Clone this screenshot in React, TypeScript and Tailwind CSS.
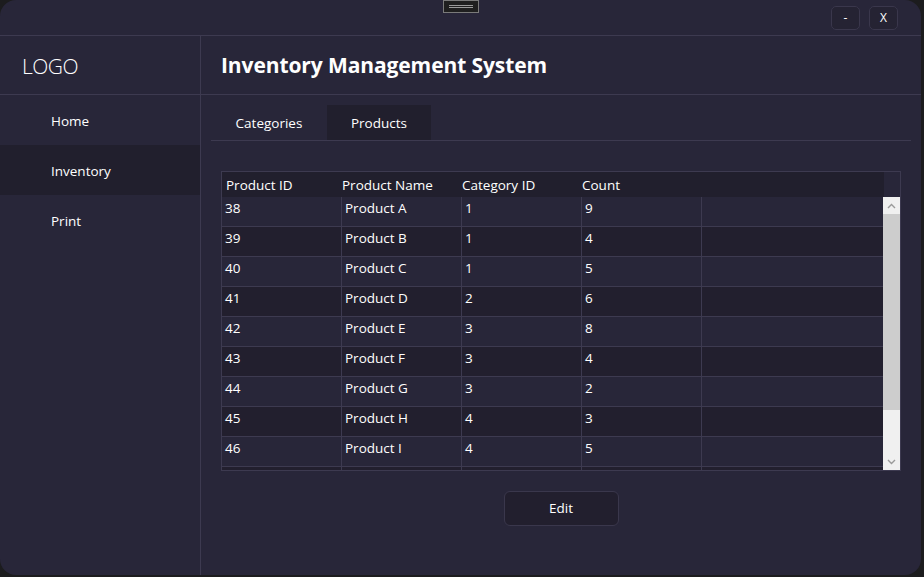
import React from 'react'

const rows = [
  { id: 38, name: 'Product A', cat: 1, count: 9 },
  { id: 39, name: 'Product B', cat: 1, count: 4 },
  { id: 40, name: 'Product C', cat: 1, count: 5 },
  { id: 41, name: 'Product D', cat: 2, count: 6 },
  { id: 42, name: 'Product E', cat: 3, count: 8 },
  { id: 43, name: 'Product F', cat: 3, count: 4 },
  { id: 44, name: 'Product G', cat: 3, count: 2 },
  { id: 45, name: 'Product H', cat: 4, count: 3 },
  { id: 46, name: 'Product I', cat: 4, count: 5 },
]

const navItems = ['Home', 'Inventory', 'Print']

export default function App() {
  return (
    <div
      className="w-[924px] h-[577px] bg-[#1c1c1e] text-white overflow-hidden"
      style={{ fontFamily: '"Open Sans", "Noto Sans", sans-serif' }}
    >
      <div className="w-[921px] h-[575px] bg-[#282639] rounded-[16px] flex flex-col overflow-hidden">
        {/* Title bar */}
        <div className="relative h-[36px] border-b border-[#3d3a50] flex items-start justify-end pr-[23px] pt-[6px] gap-[9px] shrink-0">
          <div className="absolute left-[443px] top-0 w-[36px] h-[13px] bg-[#1f1f1f] border border-[#7a7a7a] flex flex-col items-center justify-center gap-[1px]">
            <div className="w-[24px] h-px bg-[#9a9a9a]" />
            <div className="w-[24px] h-px bg-[#9a9a9a]" />
          </div>
          <button className="w-[29px] h-[24px] rounded-[5px] border border-[#3a374c] bg-[#252333] text-[12px] leading-none flex items-center justify-center">
            -
          </button>
          <button className="w-[29px] h-[24px] rounded-[5px] border border-[#3a374c] bg-[#252333] text-[12px] leading-none flex items-center justify-center">
            X
          </button>
        </div>

        <div className="flex flex-1 min-h-0">
          {/* Sidebar */}
          <div className="w-[201px] border-r border-[#3d3a50] flex flex-col shrink-0">
            <div className="h-[59px] border-b border-[#3d3a50] flex items-center pl-[22px] pt-[3px] text-[21px] font-light tracking-[-0.5px]">
              LOGO
            </div>
            {navItems.map((item) => (
              <div
                key={item}
                className={`h-[50px] flex items-center pl-[51px] pt-[2px] text-[13.5px] ${
                  item === 'Inventory' ? 'bg-[#211f2d]' : ''
                }`}
              >
                {item}
              </div>
            ))}
          </div>

          {/* Main */}
          <div className="flex-1 flex flex-col min-w-0">
            <div className="h-[59px] border-b border-[#3d3a50] flex items-center pl-[20px] pt-[2px] text-[21px] font-bold tracking-[-0.1px]">
              Inventory Management System
            </div>

            <div className="pl-[10px] pr-[10px] pt-[10px]">
              <div className="flex border-b border-[#3d3a50] h-[36px]">
                <div className="w-[116px] flex items-center justify-center pt-[2px] text-[13.5px]">Categories</div>
                <div className="w-[104px] flex items-center justify-center pt-[2px] text-[13.5px] bg-[#211f2d]">Products</div>
              </div>
            </div>

            {/* Table */}
            <div className="ml-[20px] mt-[30px] w-[680px] h-[300px] border border-[#3d3a50] flex flex-col overflow-hidden">
              <div className="flex h-[25px] shrink-0">
                <div className="flex-1 flex bg-[#211f2d] text-[13.5px]">
                  <div className="w-[120px] pl-[4px] pt-[3px]">Product ID</div>
                  <div className="w-[120px] pl-[0px] pt-[3px]">Product Name</div>
                  <div className="w-[120px] pl-[0px] pt-[3px]">Category ID</div>
                  <div className="w-[120px] pl-[0px] pt-[3px]">Count</div>
                </div>
                <div className="w-[16px]" />
              </div>
              <div className="flex flex-1 min-h-0">
                <div className="flex-1 flex flex-col overflow-hidden">
                  {rows.concat([{ id: 0, name: '', cat: 0, count: 0 }]).map((r, i) => (
                    <div
                      key={i}
                      className={`flex h-[30px] shrink-0 border-b border-[#3d3a50] text-[13.5px] ${
                        i % 2 === 1 ? 'bg-[#221f2e]' : 'bg-[#282639]'
                      }`}
                    >
                      <div className="w-[120px] border-r border-[#3d3a50] pl-[3px] pt-[1px]">{r.id || ''}</div>
                      <div className="w-[120px] border-r border-[#3d3a50] pl-[3px] pt-[1px]">{r.name}</div>
                      <div className="w-[120px] border-r border-[#3d3a50] pl-[3px] pt-[1px]">{r.cat || ''}</div>
                      <div className="w-[120px] border-r border-[#3d3a50] pl-[3px] pt-[1px]">{r.count || ''}</div>
                      <div className="flex-1" />
                    </div>
                  ))}
                </div>
                {/* Scrollbar */}
                <div className="w-[17px] bg-[#f0f0f0] flex flex-col shrink-0">
                  <div className="h-[17px] flex items-center justify-center">
                    <svg width="9" height="6" viewBox="0 0 9 6">
                      <path d="M1 5 L4.5 1.5 L8 5" stroke="#9a9a9a" strokeWidth="1.4" fill="none" />
                    </svg>
                  </div>
                  <div className="h-[196px] bg-[#cdcdcd]" />
                  <div className="flex-1" />
                  <div className="h-[17px] flex items-center justify-center">
                    <svg width="9" height="6" viewBox="0 0 9 6">
                      <path d="M1 1 L4.5 4.5 L8 1" stroke="#9a9a9a" strokeWidth="1.4" fill="none" />
                    </svg>
                  </div>
                </div>
              </div>
            </div>

            <div className="flex justify-center mt-[20px]">
              <button className="w-[115px] h-[35px] rounded-[6px] border border-[#3a374c] bg-[#221f2e] text-[13.5px]">
                Edit
              </button>
            </div>
          </div>
        </div>
      </div>
    </div>
  )
}
